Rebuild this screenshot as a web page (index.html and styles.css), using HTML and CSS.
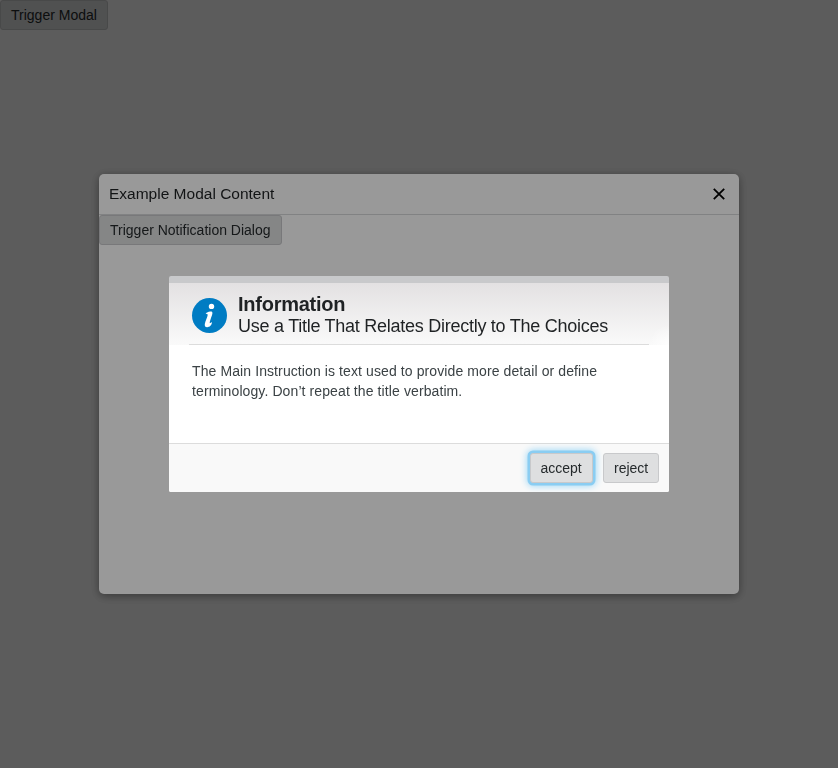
FILE: index.html
```html
<!DOCTYPE html>
<html lang="en">
<head>
<meta charset="utf-8">
<title>Notification Dialog</title>
<link rel="stylesheet" href="styles.css">
</head>
<body>
<button class="btn">Trigger Modal</button>
<div class="overlay">
  <section class="modal">
    <header class="modal-head">
      <h1>Example Modal Content</h1>
      <svg class="close" width="14" height="14" viewBox="0 0 14 14"><path d="M1.8 1.8 12.2 12.2M12.2 1.8 1.8 12.2"/></svg>
    </header>
    <button class="btn btn-wide">Trigger Notification Dialog</button>
  </section>
</div>
<div class="overlay">
  <section class="dialog">
    <header class="dialog-head">
      <svg class="info" width="36" height="36" viewBox="0 0 36 36">
        <circle cx="18.5" cy="18.5" r="17.5" fill="#007cc3"/>
        <circle cx="20.5" cy="9.4" r="2.7" fill="#fff"/>
        <path d="M14.6 16.2C16.7 14.8 18.8 14.4 20.6 14.4C22.3 15.2 21 18.2 20 21C19.2 23.4 18.5 25.3 18.8 26.2C19.5 26.2 20.2 25.7 20.9 25C21 28.2 18.5 30.2 16.2 30.2C14 30.2 13.4 28.6 13.9 26.4C14.5 23.6 16.4 20.4 16.8 17.4C16.1 17.3 15.3 17 14.6 16.2Z" fill="#fff"/>
      </svg>
      <div class="titles">
        <h2>Information</h2>
        <h3>Use a Title That Relates Directly to The Choices</h3>
      </div>
    </header>
    <p class="message">The Main Instruction is text used to provide more detail or define terminology. Don’t repeat the title verbatim.</p>
    <footer class="dialog-foot">
      <button class="btn focused">accept</button>
      <button class="btn">reject</button>
    </footer>
  </section>
</div>
</body>
</html>
```
FILE: styles.css
```css
* { box-sizing: border-box; }
body {
  margin: 0;
  height: 768px;
  background: #fff;
  color: #1f2224;
  font: 14px/20px "Liberation Sans", Arial, sans-serif;
  overflow: hidden;
}
h1, h2, h3, p { margin: 0; }
.btn {
  display: block;
  height: 30px;
  width: 108px;
  padding: 0 0 0 10px;
  border: 1px solid #c8c9cb;
  border-radius: 3px;
  background: #dedfe0;
  color: #252a2c;
  font: 14px/20px "Liberation Sans", Arial, sans-serif;
  text-align: left;
  white-space: nowrap;
}
.btn-wide { width: 183px; }
.overlay {
  position: fixed;
  inset: 0;
  display: flex;
  align-items: center;
  justify-content: center;
  background: rgba(0, 0, 0, .4);
}
.modal {
  width: 640px;
  height: 420px;
  border-radius: 5px;
  background: #fff;
  box-shadow: 0 2px 10px rgba(0, 0, 0, .4);
}
.modal-head {
  display: flex;
  align-items: center;
  justify-content: space-between;
  height: 41px;
  padding: 0 13px 0 10px;
  border-bottom: 1px solid #d8d9da;
}
.modal-head h1 { font-size: 15.5px; font-weight: 400; }
.close { fill: none; stroke: #000; stroke-width: 1.8; }
.dialog {
  display: flex;
  flex-direction: column;
  width: 500px;
  height: 216px;
  border-top: 7px solid #c8c9cb;
  border-radius: 2px;
  background: #fff;
  overflow: hidden;
}
.dialog-head {
  display: flex;
  height: 62px;
  padding: 0 20px 0 22px;
  background: radial-gradient(ellipse 20px 20px at 100% 100%, rgba(255, 255, 255, .8), transparent), linear-gradient(#e3e1e2, #fafafa);
  position: relative;
}
.dialog-head::after {
  content: "";
  position: absolute;
  left: 20px;
  right: 20px;
  bottom: 0;
  height: 1px;
  background: #dcdcdc;
}
.info { margin: 14px 11px 0 0; }
.titles { padding-top: 10px; white-space: nowrap; }
.titles h2 { font-size: 20px; line-height: 22px; letter-spacing: -.25px; }
.titles h3 { font-size: 18px; line-height: 22px; font-weight: 400; letter-spacing: -.262px; }
.message { flex: 1; width: 450px; padding: 16px 0 0 23px; color: #3b4245; letter-spacing: .1px; }
.dialog-foot {
  display: flex;
  justify-content: flex-end;
  gap: 10px;
  height: 49px;
  padding: 9px 10px;
  border-top: 1px solid #dcdcdc;
  background: #f9f9f9;
}
.dialog-foot .btn { width: 56px; }
.dialog-foot .focused { width: 63.5px; box-shadow: 0 0 0 2.5px #8acdf2, 0 0 7px 3px #9ad6f6; }
```
